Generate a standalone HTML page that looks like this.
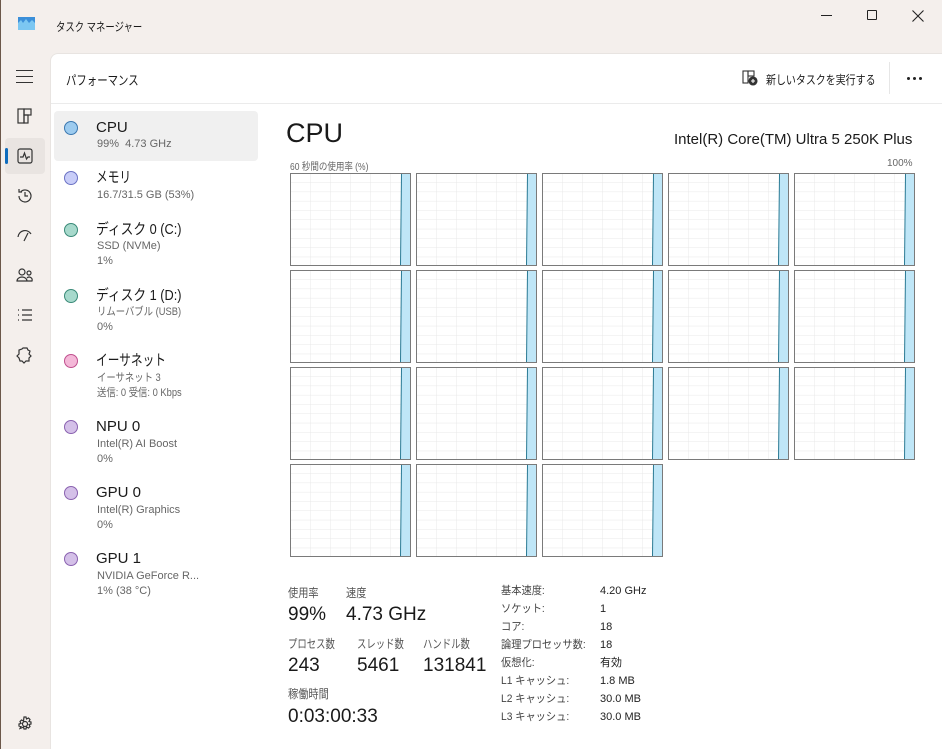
<!DOCTYPE html>
<html><head><meta charset="utf-8"><style>
*{margin:0;padding:0;box-sizing:border-box}
body{width:942px;height:749px;overflow:hidden;background:#f4efec;font-family:"Liberation Sans","Noto Sans CJK JP",sans-serif;color:#1a1a1a;position:relative}
.abs{position:absolute}
.win{position:absolute;left:0;top:0;width:942px;height:749px;background:#f4efec}
.main{position:absolute;left:50px;top:53px;width:892px;height:696px;background:#fff;border-top-left-radius:8px;border-top:1px solid #e8e4e1;border-left:1px solid #e8e4e1}
.hdr{position:absolute;left:0;top:0;width:892px;height:50px;border-bottom:1px solid #ebebeb}
.dot{position:absolute;left:64px;width:14px;height:14px;border-radius:50%;border:1px solid}
.nm{position:absolute;left:96px;font-size:15px;line-height:18px;white-space:nowrap}
.sb{position:absolute;left:97px;font-size:11px;color:#666;line-height:15px;white-space:nowrap}
.lbl{font-size:12px;color:#555;white-space:nowrap}
.big{font-size:19px}
.kv{position:absolute;font-size:11px;color:#444;line-height:18px}
.ic{position:absolute;left:16px;width:18px;height:18px}
.j{display:inline-block;transform:scaleX(.78);transform-origin:0 50%;white-space:nowrap}
.j8{display:inline-block;transform:scaleX(.85);transform-origin:0 50%;white-space:nowrap}
</style></head><body>
<div class="win">
<div class="abs" style="left:0;top:0;width:1px;height:749px;background:#6b574a"></div>
<svg class="abs" style="left:18px;top:17px" width="17" height="13"><rect width="17" height="13" fill="#3b8fd9"/><path d="M0 6 L3 3 L5 6 L8 2 L11 6 L14 3 L17 6 V13 H0Z" fill="#7cc7f2"/></svg>
<div class="abs j" style="left:56px;top:18px;font-size:12px">タスク マネージャー</div>
<div class="abs" style="left:821px;top:15px;width:11px;height:1px;background:#222"></div>
<div class="abs" style="left:867px;top:10px;width:10px;height:10px;border:1px solid #222;border-radius:1px"></div>
<svg class="abs" style="left:912px;top:10px" width="12" height="12"><path d="M0.5 0.5L11.5 11.5M11.5 0.5L0.5 11.5" stroke="#222" stroke-width="1.1"/></svg>
<div class="abs" style="left:16px;top:70px;width:17px;font-size:0">
<div style="height:1px;background:#333;margin-bottom:5px"></div><div style="height:1px;background:#333;margin-bottom:5px"></div><div style="height:1px;background:#333"></div></div>
<svg class="ic" style="top:107px" viewBox="0 0 18 18" fill="none" stroke="#333" stroke-width="1.2"><rect x="2" y="2" width="6" height="14"/><rect x="8" y="2" width="7" height="6"/><rect x="8" y="8" width="4" height="8"/></svg>
<div class="abs" style="left:5px;top:138px;width:40px;height:36px;background:#e9e4e1;border-radius:4px"></div>
<div class="abs" style="left:5px;top:148px;width:3px;height:16px;background:#0f6cbd;border-radius:2px"></div>
<svg class="ic" style="top:147px" viewBox="0 0 18 18" fill="none" stroke="#333" stroke-width="1.2"><rect x="2" y="2" width="14" height="14" rx="2"/><path d="M4 10h3l1.5-4 2 6 1.5-2h2"/></svg>
<svg class="ic" style="top:187px" viewBox="0 0 18 18" fill="none" stroke="#333" stroke-width="1.2"><path d="M3 9a6 6 0 1 0 2-4.5M3 2v3h3M9 5v4h3"/></svg>
<svg class="ic" style="top:226px" viewBox="0 0 18 18" fill="none" stroke="#333" stroke-width="1.2"><path d="M2 11a7 7 0 0 1 13-3M8 15l4-8"/></svg>
<svg class="ic" style="top:266px" viewBox="0 0 18 18" fill="none" stroke="#333" stroke-width="1.2"><circle cx="6" cy="6" r="3"/><circle cx="13" cy="7" r="2"/><path d="M1 15a5 4 0 0 1 10 0zM11 15h5a3 3 0 0 0-5-3"/></svg>
<svg class="ic" style="top:306px" viewBox="0 0 18 18" fill="none" stroke="#333" stroke-width="1.2"><path d="M2 4h1M6 4h10M2 9h1M6 9h10M2 14h1M6 14h10"/></svg>
<svg class="ic" style="top:346px" viewBox="0 0 18 18" fill="none" stroke="#333" stroke-width="1.2"><path d="M7 2h4l1 2 2 1-1 3 2 2-2 2 0 3h-3l-2 2-2-2H4l-1-3-2-2 2-2V4l3-1z"/></svg>
<svg class="ic" style="top:715px" viewBox="0 0 18 18" fill="none" stroke="#333" stroke-width="1.2"><circle cx="9" cy="9" r="2.5"/><path d="M8 2h2l.5 2 2-1 1.5 1.5-1 2 2 .5v2l-2 .5 1 2-1.5 1.5-2-1-.5 2H8l-.5-2-2 1L4 13.5l1-2-2-.5V9l2-.5-1-2L5.5 5l2 1z"/></svg>

<div class="main">
 <div class="hdr">
  <div class="abs j" style="left:15px;top:16px;font-size:13px;transform:scaleX(.8)">パフォーマンス</div>
  <svg class="abs" style="left:691px;top:16px" width="16" height="16" fill="none" stroke="#333" stroke-width="1.1"><rect x="1" y="1" width="5" height="12"/><rect x="6" y="1" width="6" height="5"/><circle cx="11" cy="11" r="4" fill="#333"/><path d="M11 9v4M9 11h4" stroke="#fff"/></svg>
  <div class="abs j" style="left:715px;top:17px;font-size:12px;transform:scaleX(.83)">新しいタスクを実行する</div>
  <div class="abs" style="left:838px;top:8px;width:1px;height:32px;background:#e6e6e6"></div>
  <div class="abs" style="left:856px;top:23px;width:3px;height:3px;border-radius:50%;background:#222"></div>
  <div class="abs" style="left:862px;top:23px;width:3px;height:3px;border-radius:50%;background:#222"></div>
  <div class="abs" style="left:868px;top:23px;width:3px;height:3px;border-radius:50%;background:#222"></div>
 </div>
</div>

<div class="abs" style="left:54px;top:111px;width:204px;height:50px;border-radius:4px;background:#f0f0f0"></div>
<div class="dot" style="top:121px;background:#9ccbef;border-color:#3b78b0"></div><div class="nm" style="top:119px">CPU</div><div class="sb" style="top:137px">99%&nbsp; 4.73 GHz</div>
<div class="dot" style="top:171px;background:#c8cdf8;border-color:#6b72c4"></div><div class="nm j" style="top:169px">メモリ</div><div class="sb" style="top:188px">16.7/31.5 GB (53%)</div>
<div class="dot" style="top:223px;background:#a7d9cc;border-color:#3a8a78"></div><div class="nm j8" style="top:221px">ディスク 0 (C:)</div><div class="sb" style="top:239px">SSD (NVMe)<br>1%</div>
<div class="dot" style="top:289px;background:#a7d9cc;border-color:#3a8a78"></div><div class="nm j8" style="top:287px">ディスク 1 (D:)</div><div class="sb" style="top:305px"><span class="j8">リムーバブル (USB)</span><br>0%</div>
<div class="dot" style="top:354px;background:#f4b8d8;border-color:#c0508e"></div><div class="nm j" style="top:352px">イーサネット</div><div class="sb" style="top:371px"><span class="j8">イーサネット 3</span><br><span class="j8">送信: 0 受信: 0 Kbps</span></div>
<div class="dot" style="top:420px;background:#d4c0e8;border-color:#8a62b0"></div><div class="nm" style="top:418px">NPU 0</div><div class="sb" style="top:437px">Intel(R) AI Boost<br>0%</div>
<div class="dot" style="top:486px;background:#d4c0e8;border-color:#8a62b0"></div><div class="nm" style="top:484px">GPU 0</div><div class="sb" style="top:503px">Intel(R) Graphics<br>0%</div>
<div class="dot" style="top:552px;background:#d4c0e8;border-color:#8a62b0"></div><div class="nm" style="top:550px">GPU 1</div><div class="sb" style="top:569px">NVIDIA GeForce R...<br>1% (38 °C)</div>

<div class="abs" style="left:286px;top:118px;font-size:27px">CPU</div>
<div class="abs" style="left:674px;top:131px;font-size:15px">Intel(R) Core(TM) Ultra 5 250K Plus</div>
<div class="abs j8" style="left:290px;top:158px;font-size:10px;color:#666">60 秒間の使用率 (%)</div>
<div class="abs" style="left:887px;top:158px;font-size:10px;color:#666">100%</div>

<div class="abs lbl j8" style="left:288px;top:584px">使用率</div>
<div class="abs lbl j8" style="left:346px;top:584px">速度</div>
<div class="abs big" style="left:288px;top:604px">99%</div>
<div class="abs big" style="left:346px;top:604px">4.73 GHz</div>
<div class="abs lbl j" style="left:288px;top:635px">プロセス数</div>
<div class="abs lbl j" style="left:357px;top:635px">スレッド数</div>
<div class="abs lbl j" style="left:423px;top:635px">ハンドル数</div>
<div class="abs big" style="left:288px;top:655px">243</div>
<div class="abs big" style="left:357px;top:655px">5461</div>
<div class="abs big" style="left:423px;top:655px">131841</div>
<div class="abs lbl j8" style="left:288px;top:685px">稼働時間</div>
<div class="abs big" style="left:288px;top:706px">0:03:00:33</div>
<div class="kv j8" style="left:501px;top:582px;transform:scaleX(.93)">基本速度:<br>ソケット:<br>コア:<br>論理プロセッサ数:<br>仮想化:<br>L1 キャッシュ:<br>L2 キャッシュ:<br>L3 キャッシュ:</div>
<div class="kv" style="left:600px;top:582px;color:#222">4.20 GHz<br>1<br>18<br>18<br>有効<br>1.8 MB<br>30.0 MB<br>30.0 MB</div>
</div>
<svg width="942" height="749" style="position:absolute;left:0;top:0">
<defs><pattern id="g2" width="20" height="9.3" patternUnits="userSpaceOnUse"><path d="M20 0V9.3M0 9.3H20" stroke="#e8e8e8" stroke-width="1" fill="none"/></pattern>
<g id="c"><rect width="120" height="92" fill="url(#g2)"/><path d="M110 92 L111 0 H120 V92Z" fill="#bfe6f7" stroke="#2a7a94"/><rect width="120" height="92" fill="none" stroke="#7a7a7a"/></g></defs>
<use href="#c" x="290.5" y="173.5"/><use href="#c" x="416.5" y="173.5"/><use href="#c" x="542.5" y="173.5"/><use href="#c" x="668.5" y="173.5"/><use href="#c" x="794.5" y="173.5"/>
<use href="#c" x="290.5" y="270.5"/><use href="#c" x="416.5" y="270.5"/><use href="#c" x="542.5" y="270.5"/><use href="#c" x="668.5" y="270.5"/><use href="#c" x="794.5" y="270.5"/>
<use href="#c" x="290.5" y="367.5"/><use href="#c" x="416.5" y="367.5"/><use href="#c" x="542.5" y="367.5"/><use href="#c" x="668.5" y="367.5"/><use href="#c" x="794.5" y="367.5"/>
<use href="#c" x="290.5" y="464.5"/><use href="#c" x="416.5" y="464.5"/><use href="#c" x="542.5" y="464.5"/>
</svg>
</body></html>
